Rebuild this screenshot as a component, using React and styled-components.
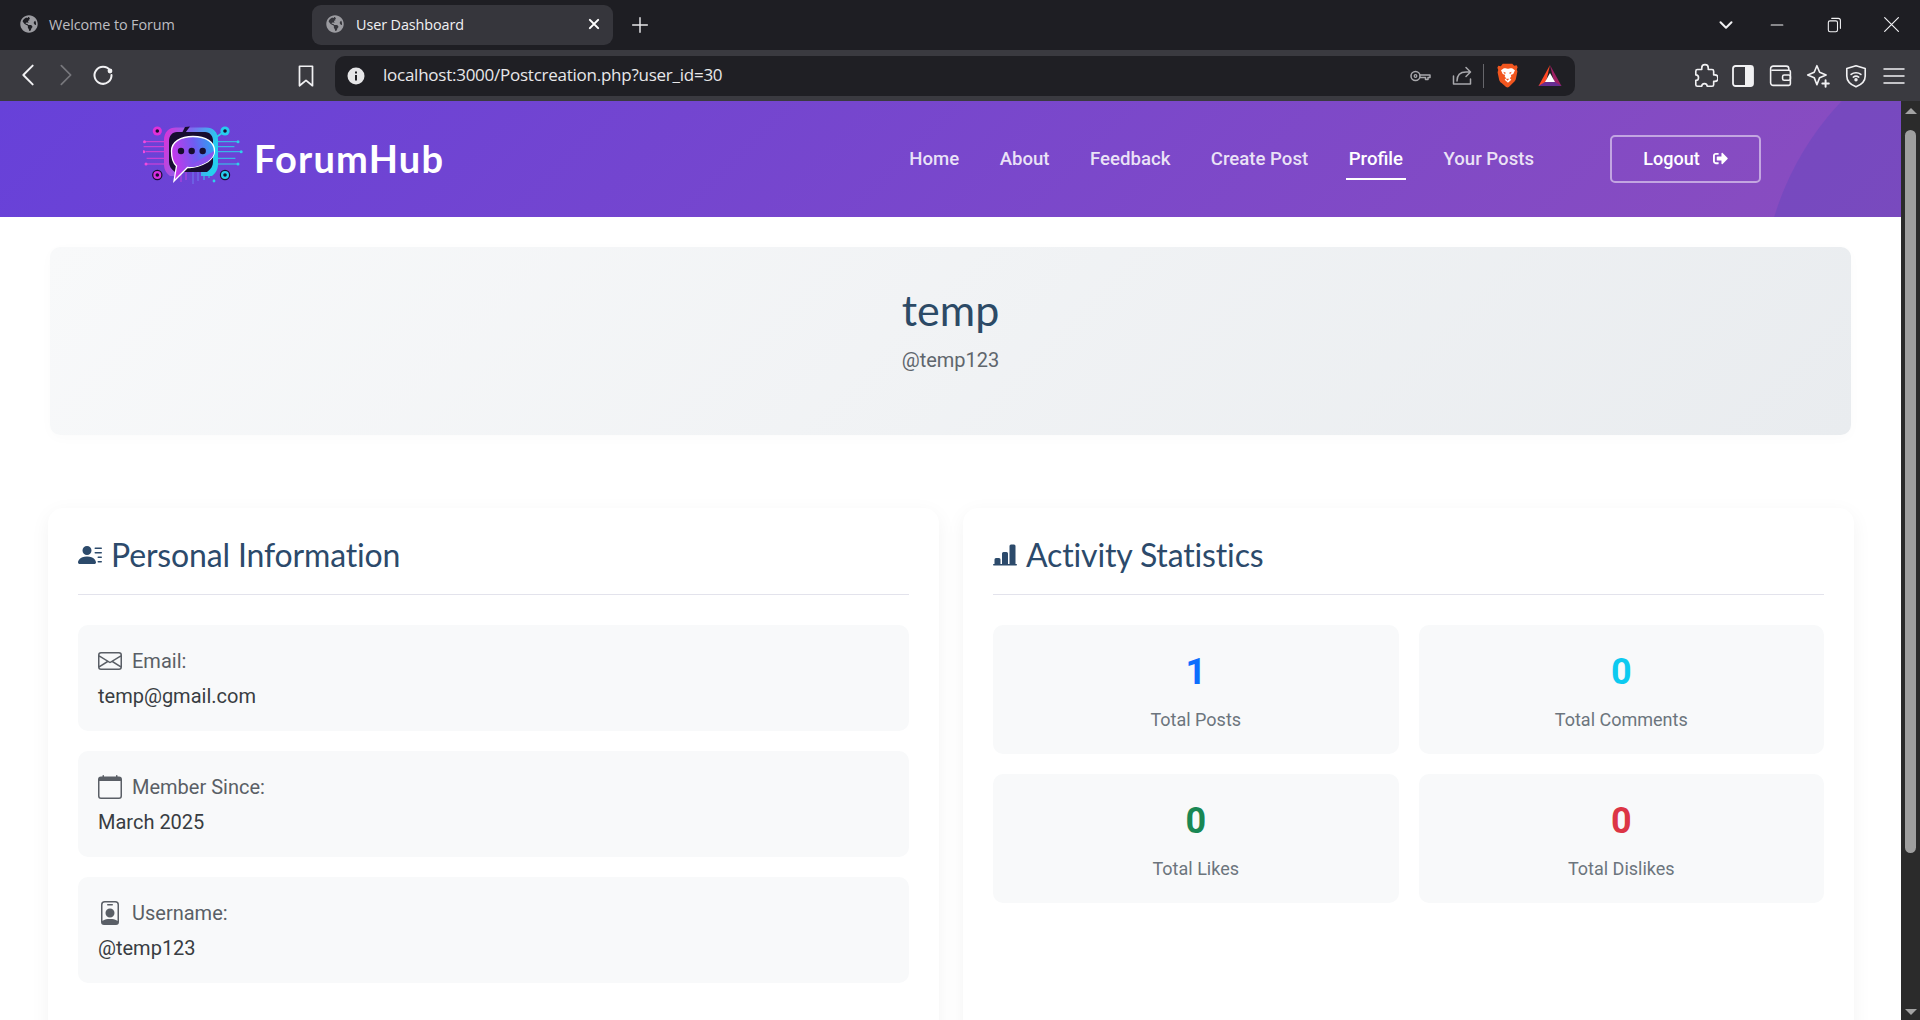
import styled, { createGlobalStyle } from 'styled-components'
import { FaGlobeAmericas, FaSignOutAlt } from 'react-icons/fa'
import {
  BsPersonLinesFill,
  BsBarChartLineFill,
  BsEnvelope,
  BsCalendar,
  BsPersonBadge,
} from 'react-icons/bs'

const GlobalStyle = createGlobalStyle`
  html, body {
    margin: 0;
    padding: 0;
    height: 100%;
    overflow: hidden;
    background: #fff;
    font-family: Roboto, "Liberation Sans", sans-serif;
  }
  * { box-sizing: border-box; }
`

const Frame = styled.div`
  width: 1920px;
  height: 1020px;
  display: flex;
  flex-direction: column;
  overflow: hidden;
`

const TabStrip = styled.div`
  height: 50px;
  flex: none;
  background: #1e1e23;
  display: flex;
  align-items: center;
  padding: 0 0 0 8px;
`

const Tab = styled.div`
  width: ${({ $active }) => ($active ? '301px' : '296px')};
  height: 40px;
  margin-left: ${({ $active }) => ($active ? '8px' : '0')};
  border-radius: 9px;
  background: ${({ $active }) => ($active ? '#36363c' : 'transparent')};
  color: ${({ $active }) => ($active ? '#f1f1f3' : '#bdbdc1')};
  display: flex;
  align-items: center;
  gap: ${({ $active }) => ($active ? '12px' : '11px')};
  padding: 0 0 2px ${({ $active }) => ($active ? '14px' : '12px')};
  font: 400 14.4px "Open Sans", sans-serif;
  letter-spacing: -0.1px;

  > svg { color: #9b9ba0; flex: none; }
`

const TabTitle = styled.span`
  flex: 1;
`

const TabClose = styled.span`
  width: 38px;
  display: flex;
  justify-content: center;
  color: #fff;
`

const NewTab = styled.div`
  width: 30px;
  margin-left: 12px;
  display: flex;
  justify-content: center;
  color: #e6e6e8;
`

const WindowControls = styled.div`
  margin-left: auto;
  display: flex;
  align-items: center;
  color: #f1f1f3;
`

const WindowButton = styled.div`
  width: ${({ $w }) => $w || 57}px;
  display: flex;
  justify-content: center;
`

const Toolbar = styled.div`
  height: 51px;
  flex: none;
  background: #3a3a40;
  display: flex;
  align-items: center;
  padding-left: 9px;
  color: #f1f1f3;
`

const ToolButton = styled.div`
  width: ${({ $w }) => $w || 37.8}px;
  margin-left: ${({ $ml }) => $ml || 0}px;
  margin-top: ${({ $up }) => ($up ? '-2px' : '0')};
  display: flex;
  justify-content: center;
  align-items: center;
  color: ${({ $dim }) => ($dim ? '#77777c' : 'inherit')};
`

const AddressBar = styled.div`
  width: 1240px;
  height: 40px;
  margin-left: 10px;
  margin-right: 111px;
  background: #1f1f24;
  border-radius: 10px;
  display: flex;
  align-items: center;
  padding: 0 9px 0 12px;
  color: #a8a8ac;
`

const UrlText = styled.span`
  margin: -2px 0 0 18px;
  flex: 1;
  font: 400 17px "Open Sans", sans-serif;
  letter-spacing: -0.25px;
  color: #e8e8ea;
`

const BarDivider = styled.span`
  width: 1px;
  height: 24px;
  background: #66666b;
  margin: 0 7px 0 9px;
`

const Viewport = styled.div`
  flex: 1;
  min-height: 0;
  display: flex;
`

const Page = styled.div`
  flex: 1;
  min-width: 0;
  background: #fff;
  overflow: hidden;
`

const ScrollTrack = styled.div`
  width: 19px;
  flex: none;
  background: #2b2b2b;
  display: flex;
  flex-direction: column;
  align-items: center;
  padding-top: 7px;
`

const ScrollThumb = styled.div`
  width: 11px;
  height: 723px;
  margin-top: 16px;
  border-radius: 6px;
  background: #9f9f9f;
`

const ScrollArrow = styled.div`
  width: 0;
  height: 0;
  border-left: 6px solid transparent;
  border-right: 6px solid transparent;
  ${({ $down }) =>
    $down
      ? 'border-top: 6px solid #a3a3a3; margin-top: auto; margin-bottom: 5px;'
      : 'border-bottom: 6px solid #a3a3a3;'}
`

const Header = styled.header`
  position: relative;
  height: 116px;
  overflow: hidden;
  background: linear-gradient(135deg, #6741d9 0%, #8a4dbf 100%);
  display: flex;
  align-items: center;
  padding: 0 140px 0 143px;

  &::after {
    content: '';
    position: absolute;
    left: 1762px;
    top: -89px;
    width: 576px;
    height: 576px;
    border-radius: 50%;
    background: rgba(90, 70, 190, 0.35);
  }
`

const Brand = styled.div`
  display: flex;
  align-items: center;
  gap: 11px;
`

const BrandName = styled.span`
  margin-top: -3px;
  font: 700 38px Lato, sans-serif;
  color: #fff;
  letter-spacing: 1.2px;
`

const Nav = styled.nav`
  margin-left: auto;
  display: flex;
  align-items: center;
  gap: 34.5px;
`

const NavLink = styled.a`
  position: relative;
  padding: 0 3px;
  font: 500 18.6px/24px Roboto, sans-serif;
  color: ${({ $active }) => ($active ? '#fff' : 'rgba(255, 255, 255, 0.85)')};

  ${({ $active }) =>
    $active &&
    `&::after {
      content: '';
      position: absolute;
      left: 0;
      right: 0;
      bottom: -9px;
      height: 2px;
      background: #fff;
    }`}
`

const LogoutButton = styled.button`
  position: relative;
  z-index: 1;
  width: 151px;
  height: 48px;
  margin-left: 73px;
  padding: 0 0 2px;
  border: 2px solid rgba(255, 255, 255, 0.5);
  border-radius: 5px;
  background: transparent;
  color: #fff;
  font: 500 18px Roboto, sans-serif;
  display: flex;
  align-items: center;
  justify-content: center;
  gap: 13px;
`

const Content = styled.main`
  padding: 30px 47px 0 48px;
`

const Hero = styled.section`
  margin: 0 3px 0 2px;
  height: 188px;
  border-radius: 10px;
  background: linear-gradient(135deg, #f8f9fa 0%, #e9ecef 100%);
  box-shadow: 0 3px 14px rgba(0, 0, 0, 0.02);
  text-align: center;
  padding-top: 38px;
`

const HeroName = styled.h1`
  margin: 0;
  font: 400 43px/50px Lato, sans-serif;
  color: #2c4a66;
`

const HeroHandle = styled.p`
  margin: 11px 0 0;
  font: 400 20px/28px Roboto, sans-serif;
  color: #5f666d;
`

const Columns = styled.div`
  margin-top: 73px;
  display: grid;
  grid-template-columns: 1fr 1fr;
  gap: 24px;
`

const Card = styled.section`
  background: #fff;
  border-radius: 15px;
  box-shadow: 0 5px 20px rgba(0, 0, 0, 0.05);
  padding: 30px;
  height: 600px;
`

const CardTitle = styled.h2`
  margin: 0 0 30px;
  padding-bottom: 23px;
  height: 57px;
  border-bottom: 1px solid #e3e3ec;
  font: 400 32px/38px Lato, sans-serif;
  letter-spacing: -0.15px;
  color: #2c4a6b;
  display: flex;
  align-items: center;
  gap: 9px;
`

const InfoList = styled.div`
  display: flex;
  flex-direction: column;
  gap: 20px;
`

const InfoItem = styled.div`
  height: 106px;
  padding: 21px 20px 20px;
  border-radius: 10px;
  background: #f8f9fa;
`

const InfoLabel = styled.div`
  display: flex;
  align-items: center;
  gap: 10px;
  height: 30px;
  font: 400 20px Roboto, sans-serif;
  color: #5a5f66;
`

const InfoValue = styled.div`
  margin-top: 5px;
  font: 400 20px/30px Roboto, sans-serif;
  color: #383d42;
`

const StatGrid = styled.div`
  display: grid;
  grid-template-columns: 1fr 1fr;
  gap: 20px;
`

const StatBox = styled.div`
  height: 129px;
  border-radius: 10px;
  background: #f8f9fa;
  text-align: center;
  padding-top: 25px;
`

const StatNumber = styled.div`
  font: 700 36px/44px Roboto, sans-serif;
  color: ${({ $color }) => $color};
`

const StatLabel = styled.div`
  margin-top: 13px;
  font: 400 18px/26px Roboto, sans-serif;
  color: #6c757d;
`

const line = { fill: 'none', stroke: 'currentColor', strokeWidth: 1.8, strokeLinecap: 'round', strokeLinejoin: 'round' }

function Ico({ size = 24, children }) {
  return (
    <svg width={size} height={size} viewBox="0 0 24 24" {...line}>
      {children}
    </svg>
  )
}

function BraveLion() {
  return (
    <svg width="21" height="25" viewBox="0 0 22 26">
      <path
        fill="#f1561f"
        d="M6 0.8h10l2 2 2.6-.5 1 2-.9 2.4.7 2.2-1.6 7.6c-.4 1.800-1.200 2.800-2.600 3.800L12.500 25c-1 .7-2 .7-3 0l-4.700-4.100c-1.400-1-2.200-2-2.600-3.800L.6 9.500l.7-2.200L.4 4.900l1-2 2.600.500z"
      />
      <path
        fill="#fff"
        d="M11 6c1.500 0 3.500-1 4.800-.6l3 2-1.800 4-2.600 1 .6 1.500-1.500 2 1.500 1.500-3.500 3.100-3.500-3.100 1.500-1.500-1.500-2 .6-1.500-2.600-1-1.800-4 3-2c1.300-.4 3.300.6 4.800.6z"
      />
      <path fill="#f1561f" d="M6.500 9l2.800 1.200-1 1.400zM15.500 9l-2.800 1.200 1 1.400zM9.200 16.500h3.600L11 18.500z" />
    </svg>
  )
}

function BatTriangle() {
  return (
    <svg width="24" height="22" viewBox="0 0 24 22">
      <path fill="#9e1f63" d="M12 0l11.500 21H17z" />
      <path fill="#ff4724" d="M12 0L.500 21H7z" />
      <path fill="#662d91" d="M.500 21h23L17 17H7z" />
      <path fill="#fff" d="M12 8l5 9H7z" />
    </svg>
  )
}

function ForumLogo() {
  return (
    <svg width="100" height="66" viewBox="0 0 100 66">
      <defs>
        <linearGradient id="frameGrad" x1="0" y1="0" x2="1" y2="0.2">
          <stop offset="0" stopColor="#e02fd6" />
          <stop offset="0.5" stopColor="#7d6cf0" />
          <stop offset="1" stopColor="#25cfee" />
        </linearGradient>
        <linearGradient id="bubbleGrad" x1="0" y1="0.4" x2="1" y2="0.2">
          <stop offset="0" stopColor="#c736ea" />
          <stop offset="0.55" stopColor="#6f5df2" />
          <stop offset="1" stopColor="#2aa5f2" />
        </linearGradient>
      </defs>
      <g stroke="#e040d8" strokeWidth="1" fill="none">
        <path d="M3 15.700h20M1 20.700h22M3 25.700h20M4 32.300h19M3 38h20" strokeLinecap="round" />
      </g>
      <g stroke="#2fd0ea" strokeWidth="1" fill="none">
        <path d="M74 15.700h21M74 20.700h17M74 25.700h24M74 32.300h18M74 38h21" strokeLinecap="round" />
      </g>
      <g strokeWidth="1" fill="none">
        <path d="M38 46v10M43 46v8" stroke="#c040e0" />
        <path d="M50 46v12M55 46v9" stroke="#6f7cf0" />
        <path d="M61 46v8M66 46v6" stroke="#2fd0ea" />
      </g>
      <circle cx="71" cy="55" r="1.400" fill="#2fd0ea" />
      <circle cx="1.500" cy="15.700" r="1.500" fill="#f04ae0" />
      <circle cx="0.800" cy="25.700" r="1.500" fill="#f04ae0" />
      <circle cx="3" cy="38" r="1.500" fill="#f04ae0" />
      <circle cx="95" cy="15.700" r="1.500" fill="#2fd0ea" />
      <circle cx="98.200" cy="25.700" r="1.500" fill="#2fd0ea" />
      <circle cx="95" cy="38" r="1.500" fill="#2fd0ea" />
      <path d="M72 12l10-7" stroke="#2fd0ea" strokeWidth="1.600" />
      <path
        d="M27 50C22 46 21 42 21 38V14C21 6 26 1.500 33 1.500h30C70 1.500 75 6 75 14v24c0 4-1 8-6 12H58V42H38v8z"
        fill="url(#frameGrad)"
      />
      <path
        d="M32 46c-4-3-6-6-6-10V15c0-5 3-9 8-9h28c5 0 8 4 8 9v21c0 4-2 7-6 10z"
        fill="#170d30"
      />
      <path d="M42 1l5-.5-6 8-3 .5z" fill="#170d30" />
      <circle cx="14.300" cy="5" r="4.600" fill="#e030d8" />
      <circle cx="14.300" cy="5" r="1.800" fill="#170d30" />
      <circle cx="82" cy="5" r="4.600" fill="#26cdee" />
      <circle cx="82" cy="5" r="1.800" fill="#170d30" />
      <circle cx="14.300" cy="49" r="5.200" fill="#170d30" />
      <circle cx="14.300" cy="49" r="4" fill="#d92fe0" />
      <circle cx="14.300" cy="49" r="1.800" fill="#170d30" />
      <circle cx="82" cy="49" r="5.200" fill="#170d30" />
      <circle cx="82" cy="49" r="4" fill="#26cdee" />
      <circle cx="82" cy="49" r="1.800" fill="#170d30" />
      <path
        d="M50 10.500c13 0 21.500 5.500 21.500 14.500 0 5-3 8-7 11-7 4-15 6-20 5.500L31 55l2.500-15C30 37 28.500 31 28.500 25c0-9 9-14.500 21.500-14.500z"
        fill="url(#bubbleGrad)"
        stroke="#fff"
        strokeWidth="1.300"
      />
      <path d="M45 41l26-16c0 5-3 8-7 11-6 3.500-13 5.500-19 5z" fill="#8a52ee" />
      <circle cx="38" cy="25" r="3.200" fill="#170d30" />
      <circle cx="48.700" cy="25" r="3.200" fill="#170d30" />
      <circle cx="59.700" cy="25" r="3.200" fill="#170d30" />
    </svg>
  )
}

const infoRows = [
  { label: 'Email:', value: 'temp@gmail.com', Icon: BsEnvelope },
  { label: 'Member Since:', value: 'March 2025', Icon: BsCalendar },
  { label: 'Username:', value: '@temp123', Icon: BsPersonBadge },
]

const stats = [
  { label: 'Total Posts', value: 1, color: '#0d6efd' },
  { label: 'Total Comments', value: 0, color: '#0dcaf0' },
  { label: 'Total Likes', value: 0, color: '#198754' },
  { label: 'Total Dislikes', value: 0, color: '#dc3545' },
]

const navItems = ['Home', 'About', 'Feedback', 'Create Post', 'Profile', 'Your Posts']

function App() {
  return (
    <Frame>
      <GlobalStyle />
      <TabStrip>
        <Tab>
          <FaGlobeAmericas size={18} />
          <TabTitle>Welcome to Forum</TabTitle>
        </Tab>
        <Tab $active>
          <FaGlobeAmericas size={18} />
          <TabTitle>User Dashboard</TabTitle>
          <TabClose>
            <Ico size={18}>
              <path d="M6.500 6.500l11 11M17.500 6.500l-11 11" strokeWidth="2.800" />
            </Ico>
          </TabClose>
        </Tab>
        <NewTab>
          <Ico size={22}>
            <path d="M12 4v16M4 12h16" strokeWidth="1.600" />
          </Ico>
        </NewTab>
        <WindowControls>
          <WindowButton $w={44}>
            <Ico size={22}>
              <path d="M6 9l6 6 6-6" strokeWidth="2.200" />
            </Ico>
          </WindowButton>
          <WindowButton $w={58}>
            <Ico size={20}>
              <path d="M5 12h14" strokeWidth="1.300" />
            </Ico>
          </WindowButton>
          <WindowButton>
            <Ico size={20}>
              <rect x="4" y="7" width="11" height="13" rx="2" strokeWidth="1.300" />
              <path d="M8 4h8a2.500 2.500 0 0 1 2.500 2.500V16" strokeWidth="1.300" />
            </Ico>
          </WindowButton>
          <WindowButton $w={57}>
            <Ico size={22}>
              <path d="M4 4l15 15M19 4L4 19" strokeWidth="1.300" />
            </Ico>
          </WindowButton>
        </WindowControls>
      </TabStrip>

      <Toolbar>
        <ToolButton $w={38} $up>
          <Ico size={28}>
            <path d="M16 4l-8 8 8 8" strokeWidth="1.700" />
          </Ico>
        </ToolButton>
        <ToolButton $dim $w={38} $up>
          <Ico size={28}>
            <path d="M8 4l8 8-8 8" strokeWidth="1.500" />
          </Ico>
        </ToolButton>
        <ToolButton $w={36} $up>
          <Ico size={24}>
            <path d="M19 7.500A8.500 8.500 0 1 0 20.500 12" strokeWidth="2" />
            <circle cx="19" cy="8" r="1.500" fill="currentColor" />
          </Ico>
        </ToolButton>
        <ToolButton $ml={166} $w={38}>
          <Ico size={26}>
            <path d="M6 3h12v18l-6-5-6 5z" strokeWidth="1.600" />
          </Ico>
        </ToolButton>
        <AddressBar>
          <svg width="18" height="18" viewBox="0 0 18 18">
            <circle cx="9" cy="9" r="8.500" fill="#e6e6e8" />
            <rect x="8" y="8" width="2" height="5.500" fill="#1f1f24" />
            <rect x="8" y="4.500" width="2" height="2" fill="#1f1f24" />
          </svg>
          <UrlText>localhost:3000/Postcreation.php?user_id=30</UrlText>
          <ToolButton $w={24}>
            <Ico size={24}>
              <circle cx="7.500" cy="12" r="4.500" strokeWidth="1.500" />
              <circle cx="7.500" cy="12" r="1.300" strokeWidth="1.300" />
              <path d="M12 11h10v2.500h-2v2h-2.500v-2H12" strokeWidth="1.500" />
            </Ico>
          </ToolButton>
          <ToolButton $ml={18} $w={24}>
            <Ico size={24}>
              <path d="M3.500 12v8h17v-5" strokeWidth="1.500" />
              <path d="M7 17c0-6 3-9 9-9h4M16 3.500L20.500 8 16 12.500" strokeWidth="1.500" />
            </Ico>
          </ToolButton>
          <BarDivider />
          <ToolButton $w={32}>
            <BraveLion />
          </ToolButton>
          <ToolButton $ml={11} $w={32}>
            <BatTriangle />
          </ToolButton>
        </AddressBar>
        <ToolButton>
          <Ico size={26}>
            <path d="M9 4.500a3 3 0 0 1 6 0V6h3.500a1.500 1.500 0 0 1 1.500 1.500V11h1a3 3 0 0 1 0 6h-1v3a1.500 1.500 0 0 1-1.500 1.500H14a2.500 2.500 0 0 0-5 0H5A1.500 1.500 0 0 1 3.500 20v-4a2.500 2.500 0 0 0 0-5V7.500A1.500 1.500 0 0 1 5 6h4z" strokeWidth="1.500" />
          </Ico>
        </ToolButton>
        <ToolButton>
          <svg width="22" height="22" viewBox="0 0 22 22">
            <rect x="1" y="1" width="20" height="20" rx="2.500" fill="none" stroke="currentColor" strokeWidth="1.800" />
            <path d="M13 1h6a2 2 0 0 1 2 2v16a2 2 0 0 1-2 2h-6z" fill="currentColor" />
          </svg>
        </ToolButton>
        <ToolButton>
          <Ico size={25}>
            <path d="M20 7V5.500A2.500 2.500 0 0 0 17.500 3H5a2.500 2.500 0 0 0-2.500 2.500V19A2.500 2.500 0 0 0 5 21.500h15a1.500 1.500 0 0 0 1.500-1.500V8.500A1.500 1.500 0 0 0 20 7H4" strokeWidth="1.500" />
            <rect x="14" y="11.500" width="7.500" height="5" rx="1.500" strokeWidth="1.500" />
          </Ico>
        </ToolButton>
        <ToolButton>
          <Ico size={26}>
            <path d="M11 2.500l2.500 6 6 2.500-6 2.500L11 20l-2.500-6.500-6-2.500 6-2.500z" strokeWidth="1.500" />
            <path d="M19 16v6M16 19h6" strokeWidth="1.800" />
          </Ico>
        </ToolButton>
        <ToolButton>
          <Ico size={26}>
            <path d="M12 2.500l8.500 2.500v7c0 5-3.500 8-8.500 10-5-2-8.500-5-8.500-10V5z" strokeWidth="1.500" />
            <path d="M7.500 10.500c2.500-2 6.500-2 9 0M9.500 13c1.500-1 3.500-1 5 0" strokeWidth="1.500" />
            <circle cx="12" cy="15.500" r="0.700" fill="currentColor" />
          </Ico>
        </ToolButton>
        <ToolButton>
          <Ico size={24}>
            <path d="M2 5h20M2 12h20M2 19h20" strokeWidth="1.500" />
          </Ico>
        </ToolButton>
      </Toolbar>

      <Viewport>
        <Page>
          <Header>
            <Brand>
              <ForumLogo />
              <BrandName>ForumHub</BrandName>
            </Brand>
            <Nav>
              {navItems.map((item) => (
                <NavLink key={item} $active={item === 'Profile'}>
                  {item}
                </NavLink>
              ))}
            </Nav>
            <LogoutButton>
              Logout
              <FaSignOutAlt size={15} />
            </LogoutButton>
          </Header>

          <Content>
            <Hero>
              <HeroName>temp</HeroName>
              <HeroHandle>@temp123</HeroHandle>
            </Hero>

            <Columns>
              <Card>
                <CardTitle>
                  <BsPersonLinesFill size={24} />
                  Personal Information
                </CardTitle>
                <InfoList>
                  {infoRows.map(({ label, value, Icon }) => (
                    <InfoItem key={label}>
                      <InfoLabel>
                        <Icon size={24} />
                        {label}
                      </InfoLabel>
                      <InfoValue>{value}</InfoValue>
                    </InfoItem>
                  ))}
                </InfoList>
              </Card>

              <Card>
                <CardTitle>
                  <BsBarChartLineFill size={24} />
                  Activity Statistics
                </CardTitle>
                <StatGrid>
                  {stats.map((stat) => (
                    <StatBox key={stat.label}>
                      <StatNumber $color={stat.color}>{stat.value}</StatNumber>
                      <StatLabel>{stat.label}</StatLabel>
                    </StatBox>
                  ))}
                </StatGrid>
              </Card>
            </Columns>
          </Content>
        </Page>
        <ScrollTrack>
          <ScrollArrow />
          <ScrollThumb />
          <ScrollArrow $down />
        </ScrollTrack>
      </Viewport>
    </Frame>
  )
}

export default App
